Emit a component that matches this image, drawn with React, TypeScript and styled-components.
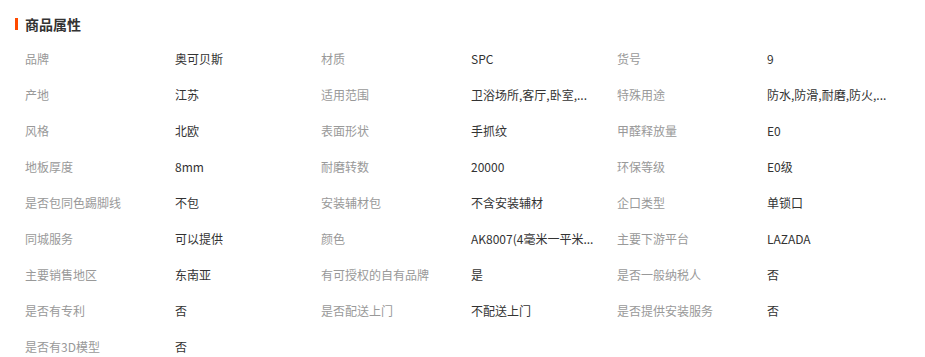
import styled, { createGlobalStyle } from 'styled-components'

const GlobalStyle = createGlobalStyle`
  body {
    margin: 0;
    background: #fff;
    font-family: "Microsoft YaHei", "Noto Sans CJK SC", "Noto Sans", sans-serif;
  }
`

const Panel = styled.section`
  width: 925px;
  padding-top: 12px;
`

const Title = styled.h3`
  display: flex;
  align-items: center;
  margin: 0 0 5px 15px;
  height: 24px;
  font-size: 14px;
  font-weight: bold;
  color: #333;

  &::before {
    content: '';
    width: 3px;
    height: 12px;
    margin-right: 7px;
    background: #ff4a00;
  }
`

const Grid = styled.div`
  display: grid;
  grid-template-columns: repeat(3, 150px 146px);
  padding-left: 25px;
`

const Cell = styled.div<{ $label?: boolean }>`
  height: 36px;
  line-height: 36px;
  font-size: 12px;
  color: ${props => props.$label ? '#999' : '#333'};
  white-space: nowrap;
`

// values already shortened the way the page shows them
const attrs: [string, string][] = [
  ['品牌', '奥可贝斯'],
  ['材质', 'SPC'],
  ['货号', '9'],
  ['产地', '江苏'],
  ['适用范围', '卫浴场所,客厅,卧室,...'],
  ['特殊用途', '防水,防滑,耐磨,防火,...'],
  ['风格', '北欧'],
  ['表面形状', '手抓纹'],
  ['甲醛释放量', 'E0'],
  ['地板厚度', '8mm'],
  ['耐磨转数', '20000'],
  ['环保等级', 'E0级'],
  ['是否包同色踢脚线', '不包'],
  ['安装辅材包', '不含安装辅材'],
  ['企口类型', '单锁口'],
  ['同城服务', '可以提供'],
  ['颜色', 'AK8007(4毫米一平米...'],
  ['主要下游平台', 'LAZADA'],
  ['主要销售地区', '东南亚'],
  ['有可授权的自有品牌', '是'],
  ['是否一般纳税人', '否'],
  ['是否有专利', '否'],
  ['是否配送上门', '不配送上门'],
  ['是否提供安装服务', '否'],
  ['是否有3D模型', '否'],
]

const App = () => {
  return (
    <Panel>
      <GlobalStyle />
      <Title>商品属性</Title>
      <Grid>
        {attrs.map(([k, v]) => [
          <Cell key={k + '-k'} $label>{k}</Cell>,
          <Cell key={k + '-v'}>{v}</Cell>,
        ])}
      </Grid>
    </Panel>
  )
}

export default App
